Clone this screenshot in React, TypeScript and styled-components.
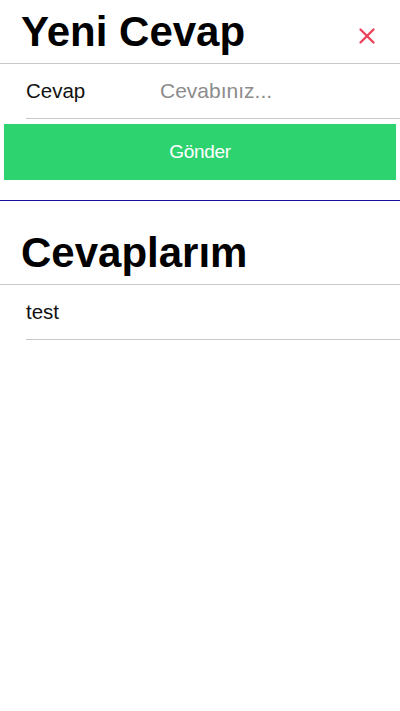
import React from "react";
import styled, { createGlobalStyle } from "styled-components";

const Global = createGlobalStyle`
  html, body { margin: 0; padding: 0; background: #fff; }
  body { font-family: "Liberation Sans", Arial, sans-serif; color: #000; overflow-x: hidden; }
  * { box-sizing: border-box; }
`;

const Page = styled.div`
  display: flex;
  flex-direction: column;
  width: 400px;
`;

const Header = styled.div<{ $top?: number }>`
  display: flex;
  align-items: center;
  justify-content: space-between;
  padding: ${(p) => p.$top ?? 10}px 0 10px 21px;
  height: ${(p) => (p.$top ?? 10) + 54}px;
  border-bottom: 1px solid #c8c7cc;
`;

const Title = styled.h1`
  margin: 0;
  font-size: 42px;
  line-height: 42px;
  font-weight: 700;
  letter-spacing: 0;
`;

const CloseButton = styled.button`
  border: none;
  background: transparent;
  padding: 0;
  margin: 9px 24px 0 0;
  width: 18px;
  height: 18px;
  display: flex;
  align-items: center;
  justify-content: center;
  cursor: pointer;
`;

const Row = styled.div`
  padding-left: 26px;
`;

const RowInner = styled.div`
  display: flex;
  align-items: center;
  height: 55px;
  border-bottom: 1px solid #c8c7cc;
  font-size: 20.5px;
`;

const Label = styled.label`
  width: 134px;
  flex: none;
  color: #111;
`;

const Input = styled.input`
  flex: 1;
  min-width: 0;
  width: 100px;
  border: none;
  outline: none;
  padding: 0;
  font-family: inherit;
  font-size: 21px;
  background: transparent;
  &::placeholder { color: #8c8c8c; }
`;

const Text = styled.span`
  color: #111;
`;

const SubmitButton = styled.button`
  margin: 5px 4px 0;
  height: 56px;
  border: none;
  background: #2dd36f;
  color: #fff;
  font-family: inherit;
  font-size: 19px;
  letter-spacing: -0.3px;
  cursor: pointer;
`;

const Divider = styled.hr`
  margin: 20px 0 0;
  border: none;
  border-top: 1px solid #1a0d9c;
  height: 0;
`;

export default function App() {
  return (
    <Page>
      <Global />
      <Header>
        <Title>Yeni Cevap</Title>
        <CloseButton aria-label="Kapat">
          <svg width="18" height="18" viewBox="0 0 18 18">
            <path d="M2.5 2.5 L15.5 15.5 M15.5 2.5 L2.5 15.5" stroke="#eb445a" strokeWidth="2.4" strokeLinecap="round" />
          </svg>
        </CloseButton>
      </Header>
      <Row>
        <RowInner>
          <Label>Cevap</Label>
          <Input placeholder="Cevabınız..." />
        </RowInner>
      </Row>
      <SubmitButton>Gönder</SubmitButton>
      <Divider />
      <Header $top={30}>
        <Title>Cevaplarım</Title>
      </Header>
      <Row>
        <RowInner>
          <Text>test</Text>
        </RowInner>
      </Row>
    </Page>
  );
}
